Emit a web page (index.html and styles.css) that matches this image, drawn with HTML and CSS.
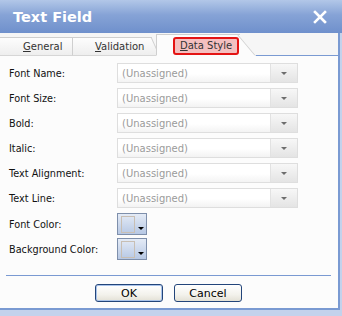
FILE: index.html
```html
<!DOCTYPE html>
<html lang="en">
<head>
    <meta charset="UTF-8">
    <title>Text Field</title>
    <link rel="stylesheet" href="styles.css">
</head>
<body>
    <div class="window">
        <div class="titlebar">
            <span class="title">Text Field</span>
            <svg class="close" width="14" height="14" viewBox="0 0 14 14">
                <path d="M2 2 L12 12 M12 2 L2 12" stroke="#fff" stroke-width="2.6" stroke-linecap="square"/>
            </svg>
        </div>

        <div class="panel">
            <div class="tabs">
                <div class="tab tab1"><span><u>G</u>eneral</span></div>
                <div class="tab tab2"><span><u>V</u>alidation</span></div>
                <div class="tab tab3 active"><span class="mark"><u>D</u>ata Style</span></div>
                <div class="tabfill"></div>
            </div>

            <div class="form">
                <div class="row">
                    <label>Font Name:</label>
                    <div class="select"><span>(Unassigned)</span><div class="drop"><i></i></div></div>
                </div>
                <div class="row">
                    <label>Font Size:</label>
                    <div class="select"><span>(Unassigned)</span><div class="drop"><i></i></div></div>
                </div>
                <div class="row">
                    <label>Bold:</label>
                    <div class="select"><span>(Unassigned)</span><div class="drop"><i></i></div></div>
                </div>
                <div class="row">
                    <label>Italic:</label>
                    <div class="select"><span>(Unassigned)</span><div class="drop"><i></i></div></div>
                </div>
                <div class="row">
                    <label>Text Alignment:</label>
                    <div class="select"><span>(Unassigned)</span><div class="drop"><i></i></div></div>
                </div>
                <div class="row">
                    <label>Text Line:</label>
                    <div class="select"><span>(Unassigned)</span><div class="drop"><i></i></div></div>
                </div>
                <div class="row color-row">
                    <label>Font Color:</label>
                    <div class="colorbtn"><div class="swatch"></div><i></i></div>
                </div>
                <div class="row color-row">
                    <label>Background Color:</label>
                    <div class="colorbtn"><div class="swatch"></div><i></i></div>
                </div>
            </div>

            <div class="footer">
                <button class="btn default">OK</button>
                <button class="btn">Cancel</button>
            </div>
        </div>
    </div>
</body>
</html>
```

FILE: styles.css
```css
body {
    margin: 0;
    font-family: 'DejaVu Sans', sans-serif;
    background-color: #c3d2ec;
}

.window {
    width: 342px;
    height: 316px;
    background-color: #c3d2ec;
}

.titlebar {
    height: 33px;
    display: flex;
    align-items: center;
    justify-content: space-between;
    padding: 0 15px 0 13px;
    box-sizing: border-box;
    background: linear-gradient(#b2c7e8, #86a3d6 45%, #6f90cc);
}

.title {
    color: #fff;
    font-weight: bold;
    font-size: 14.5px;
    margin-top: 1px;
}

.close {
    margin-top: 1px;
}

.panel {
    width: 340px;
    height: 277px;
    box-sizing: border-box;
    background-color: #fcfcfc;
    border-right: 2px solid #7a9ad2;
    border-bottom: 2px solid #7a9ad2;
}

/* tabs */
.tabs {
    height: 23px;
    display: flex;
    align-items: flex-end;
    background-color: #f6f6f6;
}

.tab {
    position: relative;
    height: 19px;
    display: flex;
    align-items: center;
    font-size: 10px;
    color: #333;
    background: linear-gradient(#fdfdfd, #eeeeee);
    border-top: 1px solid #cfcfcf;
    border-left: 1px solid #cfcfcf;
    border-bottom: 1px solid #d6d6d6;
    box-sizing: border-box;
}

.tab::after {
    content: "";
    position: absolute;
    z-index: -1;
    top: -1px;
    bottom: -1px;
    right: -9px;
    width: 18px;
    background: inherit;
    border-top: 1px solid #cfcfcf;
    border-right: 1px solid #cfcfcf;
    border-bottom: 1px solid #d6d6d6;
    transform: skewX(24deg);
    transform-origin: bottom left;
}

.tab1 {
    z-index: 1;
    width: 73px;
    margin-left: -1px;
    padding-left: 23px;
}

.tab2 {
    z-index: 2;
    width: 79px;
    padding-left: 22px;
}

.tab3 {
    z-index: 3;
    width: 84px;
    padding-left: 16px;
    margin-left: 5px;
}

.tab.active {
    height: 22px;
    background: #fcfcfc;
    border-bottom-color: #fcfcfc;
}

.tab.active::after {
    right: -16px;
    width: 24px;
    transform: skewX(40deg);
    border-bottom-color: #fcfcfc;
}

.mark {
    display: flex;
    align-items: center;
    height: 14px;
    padding: 0 5px;
    margin-top: 1px;
    border: 2px solid #e41414;
    border-radius: 3px;
    background-color: #f4c0c0;
    white-space: nowrap;
}

.tabfill {
    flex: 1;
    border-bottom: 1px solid #7a9ad2;
}

/* form */
.form {
    padding: 7px 0 0 9px;
    display: flex;
    flex-direction: column;
    gap: 5px;
}

.row {
    display: flex;
    align-items: center;
    height: 20px;
}

.color-row {
    height: 22px;
}

.color-row + .color-row {
    margin-top: -2px;
}

.row label {
    width: 108px;
    font-size: 9.7px;
    color: #111;
}

.select {
    width: 181px;
    height: 20px;
    box-sizing: border-box;
    border: 1px solid #dedede;
    background: linear-gradient(#ffffff 55%, #f3f3f3);
    display: flex;
    align-items: center;
}

.select span {
    flex: 1;
    padding-left: 4px;
    font-size: 10px;
    color: #9a9a9a;
}

.drop {
    width: 26px;
    height: 18px;
    border-left: 1px solid #e2e2e2;
    background: linear-gradient(#f7f7f7, #e4e4e4);
    display: flex;
    align-items: center;
    justify-content: center;
}

.drop i {
    width: 0;
    height: 0;
    border-left: 3px solid transparent;
    border-right: 3px solid transparent;
    border-top: 3px solid #6d6d6d;
    margin-top: 1px;
}

.colorbtn {
    width: 30px;
    height: 22px;
    box-sizing: border-box;
    border: 1px solid #7e8fab;
    background: linear-gradient(#e4ebf6, #b7c8e4);
    display: flex;
    align-items: flex-start;
    padding: 2px 0 0 3px;
    gap: 3px;
}

.swatch {
    width: 12px;
    height: 15px;
    border: 1px solid #c8bfb4;
}

.colorbtn i {
    width: 0;
    height: 0;
    margin-top: 11px;
    border-left: 3px solid transparent;
    border-right: 3px solid transparent;
    border-top: 3px solid #000;
}

/* footer */
.footer {
    margin: 15px 7px 0 6px;
    border-top: 1px solid #7a9ad2;
    padding-top: 8px;
    display: flex;
    justify-content: center;
    gap: 11px;
}

.btn {
    width: 68px;
    height: 18px;
    padding: 0;
    font-family: 'DejaVu Sans', sans-serif;
    font-size: 11px;
    color: #000;
    border: 1px solid #23457a;
    border-radius: 3px;
    background: linear-gradient(#ffffff, #f3f2ec 60%, #e3e1d6);
}

.btn.default {
    box-shadow: inset 0 0 0 1px #a9c3ea;
}
```
